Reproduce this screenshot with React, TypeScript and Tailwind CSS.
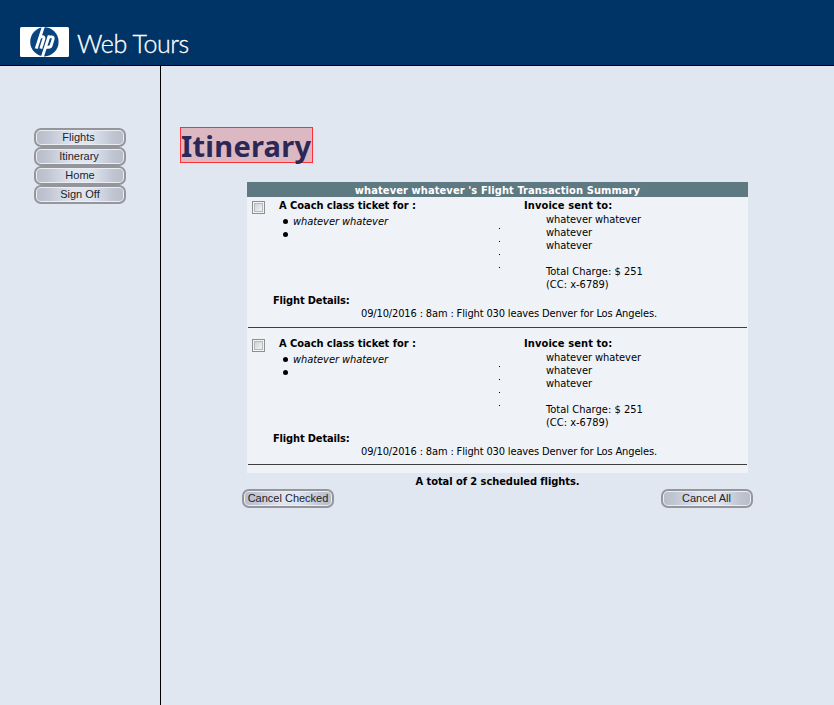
import React from "react";

const body = "font-['DejaVu_Sans_Condensed','DejaVu_Sans',sans-serif]";

function HpLogo() {
  return (
    <svg width="49" height="30" viewBox="0 0 49 30" className="block">
      <rect width="49" height="30" rx="1.5" fill="#fff" />
      <ellipse cx="24.4" cy="14.8" rx="14.2" ry="14.6" fill="#0a4480" />
      <g fill="none" stroke="#fff" strokeWidth="2.9">
        <path d="M23.4 -0.5 L16.2 21.6" />
        <path d="M19.8 9.8 H22.4 Q24.4 9.8 23.8 12 L20.8 21.6" />
        <path d="M29.2 8.6 L22.2 30.5" />
        <path d="M28 9.9 H31.6 Q33.8 9.9 33.1 12.1 L31.3 18 Q30.7 20.2 28.5 20.2 H25" />
      </g>
    </svg>
  );
}

function ImageButton({ label, shift = "" }: { label: string; shift?: string }) {
  return (
    <button className="block h-[19px] w-[92px] rounded-[7px] border-2 border-[#95969b] bg-[#e9edf4] p-px">
      <span
        className={`flex h-[13px] w-full items-center justify-center rounded-[4px] bg-[linear-gradient(90deg,#b9bdca_0%,#c0c5d2_12%,#e0e6f0_42%,#e0e6f0_62%,#c0c5d2_88%,#b9bdca_100%)] pb-px font-['Liberation_Sans',Arial,sans-serif] text-[11px] leading-[13px] whitespace-nowrap text-[#222228] ${shift}`}
      >
        {label}
      </span>
    </button>
  );
}

function FlightRow() {
  return (
    <section className="px-px">
      <div className="flex h-[96px]">
        <div className="w-[31px] pt-[4px] pl-[4px]">
          <div className="size-[13px] border border-[#8e8f8f] bg-[#f4f4f4] p-px">
            <div className="size-[9px] border border-[#b5b9be] bg-linear-to-br from-[#cfd3d8] to-[#f3f3f3]" />
          </div>
        </div>
        <div className="w-[220px] pt-[2px]">
          <div className="font-bold tracking-[-0.04px]">A Coach class ticket for :</div>
          <ul className="pt-[3px] pl-[4px]">
            <li className="flex h-[13px] gap-[5px]">
              <span className="mt-[4px] size-[5px] rounded-full bg-black" />
              <span className="tracking-[-0.06px] italic">whatever whatever</span>
            </li>
            <li className="flex h-[13px]">
              <span className="mt-[4px] size-[5px] rounded-full bg-black" />
            </li>
          </ul>
        </div>
        <div className="flex w-[25px] flex-col gap-[12px] pt-[31px]">
          <span className="size-px bg-black" />
          <span className="size-px bg-black" />
          <span className="size-px bg-black" />
          <span className="size-px bg-black" />
        </div>
        <div className="pt-[2px]">
          <div className="font-bold tracking-[0.1px]">Invoice sent to:</div>
          <div className="pt-px pl-[22px]">
            <div className="tracking-[-0.06px]">whatever whatever</div>
            <div className="tracking-[-0.06px]">whatever</div>
            <div className="tracking-[-0.06px]">whatever</div>
            <div className="h-[13px]" />
            <div className="tracking-[0.03px]">Total Charge: $ 251</div>
            <div>(CC: x-6789)</div>
          </div>
        </div>
      </div>
      <div className="pt-px pl-[25px] font-bold tracking-[-0.15px]">Flight Details:</div>
      <div className="pl-[113px] tracking-[-0.14px]">09/10/2016 : 8am : Flight 030 leaves Denver for Los Angeles.</div>
    </section>
  );
}

export default function App() {
  return (
    <div className={`flex h-[705px] w-[834px] flex-col overflow-hidden bg-[#e0e7f1] ${body}`}>
      <header className="flex h-[66px] shrink-0 gap-[8px] border-b border-black bg-[#003366] pt-[27px] pl-[20px]">
        <HpLogo />
        <span className="font-['Lato',sans-serif] text-[25px] leading-[32px] font-light tracking-[-0.4px] text-white [-webkit-text-stroke:0.3px_white]">
          Web Tours
        </span>
      </header>
      <div className="flex flex-1">
        <nav className="w-[161px] border-r border-black pt-[62px] pl-[34px]">
          <ImageButton label="Flights" shift="pr-[3px]" />
          <ImageButton label="Itinerary" shift="pr-[2px]" />
          <ImageButton label="Home" />
          <ImageButton label="Sign Off" />
        </nav>
        <main className="flex-1 pt-[61px] pl-[19px]">
          <h1 className="flex h-[36px] w-[133px] items-center border border-[#ff2f35] bg-[#dcb9c2] pt-px font-['Noto_Sans',sans-serif] text-[29px] font-bold tracking-[0.25px] whitespace-nowrap text-[#2b2858]">
            Itinerary
          </h1>
          <div className="mt-[19px] ml-[67px] w-[501px] text-[11px] leading-[13px] whitespace-nowrap text-black">
            <div className="h-[15px] bg-[#5f7983] pt-[2px] text-center font-bold tracking-[0.1px] text-white">
              whatever whatever 's Flight Transaction Summary
            </div>
            <div className="h-[276px] bg-[#eff3f8]">
              <FlightRow />
              <div className="mx-px mt-[7px] mb-[7px] h-px bg-[#3f3f3f]" />
              <FlightRow />
              <div className="mx-px mt-[6px] h-px bg-[#3f3f3f]" />
            </div>
            <div className="pt-[2px] text-center font-bold tracking-[-0.05px]">A total of 2 scheduled flights.</div>
          </div>
          <div className="mt-px ml-[62px] flex w-[511px] justify-between">
            <ImageButton label="Cancel Checked" />
            <ImageButton label="Cancel All" shift="pr-px" />
          </div>
        </main>
      </div>
    </div>
  );
}
